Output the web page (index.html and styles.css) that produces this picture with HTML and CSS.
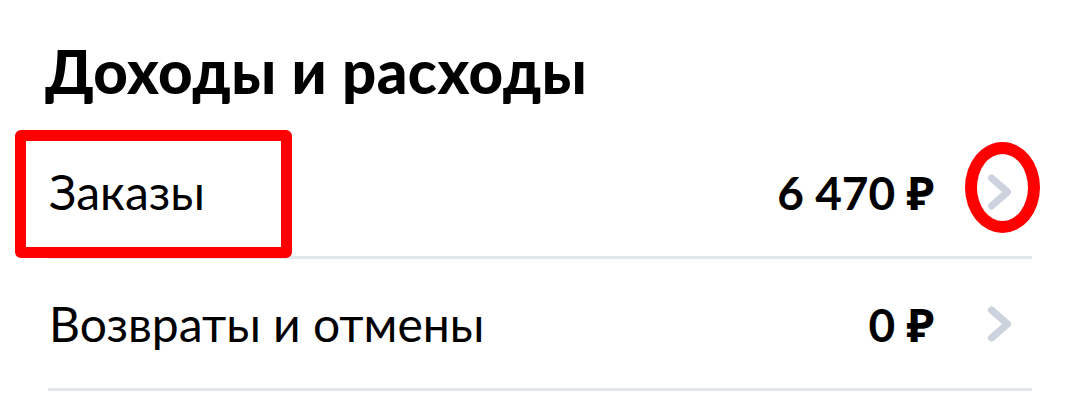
FILE: index.html
```html
<!DOCTYPE html>
<html lang="ru">
<head>
<meta charset="utf-8">
<link rel="stylesheet" href="styles.css">
</head>
<body>
<section class="panel">
  <h1 class="title">Доходы и расходы</h1>
  <div class="list">
    <div class="row">
      <span class="label">Заказы</span>
      <span class="amount">6 470 ₽</span>
      <svg class="chev" width="32" height="40" viewBox="0 0 32 40"><path d="M7.5 6 L23.5 20 L7.5 34" /></svg>
      <span class="mark-box"></span>
      <span class="mark-oval"></span>
    </div>
    <div class="row">
      <span class="label">Возвраты и отмены</span>
      <span class="amount">0 ₽</span>
      <svg class="chev" width="32" height="40" viewBox="0 0 32 40"><path d="M7.5 6 L23.5 20 L7.5 34" /></svg>
    </div>
  </div>
</section>
</body>
</html>
```
FILE: styles.css
```css
html, body {
  margin: 0;
  background: #ffffff;
}
body {
  font-family: "Lato", "Noto Sans", sans-serif;
  color: #000000;
}
.panel {
  width: 1080px;
  height: 400px;
  overflow: hidden;
}
.title {
  margin: 0;
  padding: 41px 0 0 45px;
  height: 127px;
  box-sizing: border-box;
  font-size: 60px;
  font-weight: 900;
  line-height: 1;
  letter-spacing: 0.5px;
}
.list {
  margin: 0 48px;
}
.row {
  position: relative;
  display: flex;
  align-items: center;
  height: 129px;
  border-bottom: 3px solid #e3e6ec;
  padding-right: 16px;
}
.label {
  flex: 1;
  font-size: 48px;
  font-weight: 400;
  padding-left: 1px;
}
.amount {
  font-size: 46px;
  font-weight: 700;
  margin-right: 50px;
}
.chev {
  display: block;
}
.chev path {
  fill: none;
  stroke: #cdd3de;
  stroke-width: 7;
  stroke-linecap: round;
  stroke-linejoin: round;
}
.mark-box {
  position: absolute;
  left: -33px;
  top: 3px;
  width: 277px;
  height: 128px;
  box-sizing: border-box;
  border: 11px solid #ff0000;
  border-radius: 6px;
}
.mark-oval {
  position: absolute;
  left: 917px;
  top: 15px;
  width: 75px;
  height: 91px;
  box-sizing: border-box;
  border: 12px solid #ff0000;
  border-radius: 50%;
}
```
